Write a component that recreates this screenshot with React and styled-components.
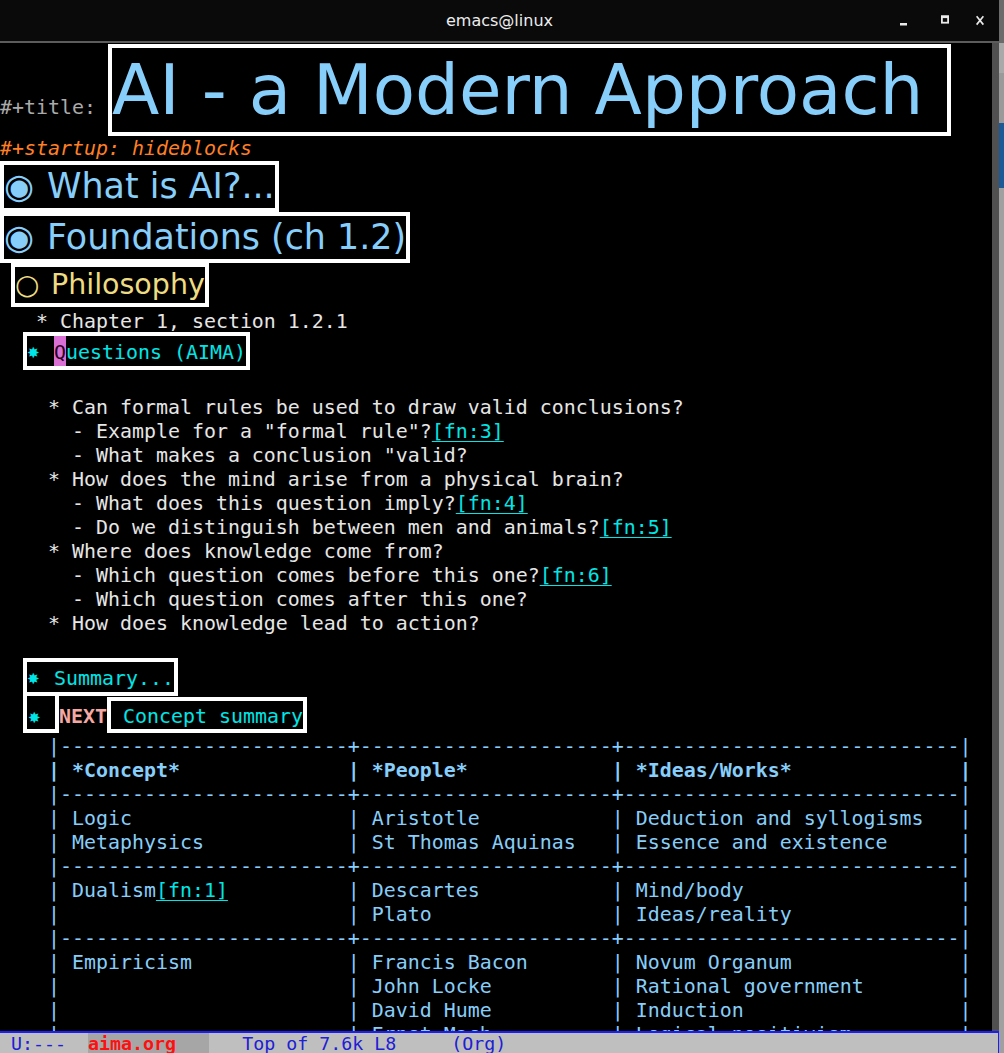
import React from 'react';
import styled, { createGlobalStyle } from 'styled-components';

const MONO = `"DejaVu Sans Mono", "Liberation Mono", monospace`;
const SANS = `"DejaVu Sans", "Liberation Sans", sans-serif`;
const MONO_SIZE = '19.93px';

const C = {
  sky: '#87cefa',
  gold: '#eedc82',
  cyan: '#00e5e5',
  text: '#e6e6e6',
  meta: '#aaaaaa',
  orange: '#ff7f24',
  salmon: '#f5a8a3',
};

const GlobalStyle = createGlobalStyle`
  html, body { margin: 0; padding: 0; background: #000; overflow: hidden; }
  #root { width: 1004px; height: 1053px; }
`;

const Screen = styled.div`
  display: flex;
  width: 1004px;
  height: 1053px;
  background: #000;
`;

const Window = styled.div`
  display: flex;
  flex-direction: column;
  width: 999px;
  height: 100%;
`;

const DesktopStrip = styled.div`
  width: 5px;
  height: 100%;
  background: linear-gradient(
    to bottom,
    #6b6b6b 0px, #6b6b6b 43px,
    #a9a9a9 43px, #a9a9a9 73px,
    #9a9a9a 73px, #9a9a9a 123px,
    #1b5a96 123px, #1b5a96 188px,
    #a0a0a0 188px
  );
`;

const TitleBar = styled.header`
  display: grid;
  grid-template-columns: 1fr auto 1fr;
  align-items: center;
  height: 41px;
  background: #0a0a0a;
  border-bottom: 2px solid #5c5c5c;
  color: #ededed;
  font-family: ${SANS};
  font-size: 16px;
`;

const WindowTitle = styled.div`
  grid-column: 2;
`;

const Controls = styled.div`
  grid-column: 3;
  display: flex;
  justify-content: flex-end;
  align-items: center;
  padding-right: 15px;
`;

const Control = styled.span`
  display: flex;
  margin-left: ${(p) => p.$gap || 0}px;
`;

const Body = styled.div`
  flex: 1;
  display: flex;
  min-height: 0;
`;

const Editor = styled.main`
  flex: 1;
  overflow: hidden;
  background: #000;
  color: ${C.text};
  font-family: ${MONO};
  font-size: ${MONO_SIZE};
  line-height: 24px;
`;

const Gutter = styled.div`
  width: 7px;
  background: #505050;
`;

const TitleRow = styled.div`
  display: flex;
  align-items: baseline;
  padding-top: 1px;
`;

const Keyword = styled.span`
  color: ${C.meta};
  white-space: pre;
`;

const TitleBox = styled.div`
  border: 4px solid #fff;
  height: 84px;
  line-height: 84px;
  padding-right: 2px;
  font-family: ${SANS};
  font-size: 69.2px;
  color: ${C.sky};
  white-space: pre;
`;

const MetaLine = styled.div`
  color: ${C.orange};
  font-style: italic;
  line-height: 25px;
  white-space: pre;
`;

const LEVELS = {
  1: { font: SANS, size: '34.9px', color: C.sky, inner: 43, lh: 43, bullet: 43, bulletSize: '34.5px' },
  2: { font: SANS, size: '28.5px', color: C.gold, inner: 36, lh: 36, bullet: 36, bulletSize: '28px' },
  3: { font: MONO, size: MONO_SIZE, color: C.cyan, inner: 30, lh: 34, bullet: 27, bulletSize: '15px' },
};

const Heading = styled.div`
  width: fit-content;
  margin-left: ${(p) => p.$indent || 0}px;
  height: ${(p) => LEVELS[p.$level].inner}px;
  line-height: ${(p) => LEVELS[p.$level].lh}px;
  border: 4px solid #fff;
  font-family: ${(p) => LEVELS[p.$level].font};
  font-size: ${(p) => LEVELS[p.$level].size};
  color: ${(p) => LEVELS[p.$level].color};
  white-space: pre;
`;

const Bullet = styled.span`
  display: inline-block;
  width: ${(p) => LEVELS[p.$level].bullet}px;
  font-family: ${SANS};
  font-size: ${(p) => LEVELS[p.$level].bulletSize};
  vertical-align: top;
`;

const Cursor = styled.span`
  display: inline-block;
  height: 30px;
  background: #da70d6;
  color: #2a0020;
  vertical-align: top;
  line-height: 34px;
`;

const TextLine = styled.div`
  white-space: pre;
  height: 24px;
  margin-top: ${(p) => p.$top || 0}px;
  line-height: ${(p) => p.$lh || 24}px;
`;

const Blank = styled.div`
  height: ${(p) => p.$h}px;
`;

const Footnote = styled.span`
  color: ${C.cyan};
  text-decoration: underline;
  text-underline-offset: 3px;
`;

const TodoRow = styled.div`
  display: flex;
  align-items: flex-start;
  margin-left: 23px;
  white-space: pre;
  color: ${C.cyan};
`;

const StarBox = styled.div`
  width: 28px;
  height: 28px;
  padding-top: 5px;
  line-height: 32px;
  border: 4px solid #fff;
  border-top: none;
`;

const StarGlyph = styled.span`
  font-family: ${SANS};
  font-size: 15px;
  padding-left: 1px;
`;

const Todo = styled.span`
  padding-top: 5px;
  height: 28px;
  line-height: 32px;
  font-weight: bold;
  color: ${C.salmon};
`;

const ConceptBox = styled.div`
  margin-top: 1px;
  height: 28px;
  line-height: 32px;
  border: 4px solid #fff;
`;

const Table = styled.div`
  margin-top: 2px;
  color: ${C.sky};
  white-space: pre;
`;

const TableLine = styled.div`
  font-weight: ${(p) => (p.$head ? 'bold' : 'normal')};
`;

const ModeLine = styled.footer`
  display: flex;
  height: 19px;
  padding-top: 1px;
  line-height: 20px;
  background: #bfbfbf;
  border-top: 2px solid #1c1cff;
  border-right: 1px solid #1c1cff;
  font-family: ${MONO};
  font-size: 18.3px;
  color: #2020d4;
  white-space: pre;
  overflow: hidden;
`;

const BufferName = styled.span`
  margin-top: -3px;
  padding-top: 1px;
  height: 21px;
  background: #a6a6a6;
  border-top: 2px solid #ff1a1a;
  color: #ff1010;
  font-weight: bold;
`;

const MinimizeIcon = () => (
  <svg width="8" height="12" viewBox="0 0 8 12">
    <rect x="0" y="8" width="7" height="2.5" fill="#eaeaea" />
  </svg>
);

const MaximizeIcon = () => (
  <svg width="8" height="12" viewBox="0 0 8 12">
    <rect x="0.9" y="1.4" width="6.2" height="6.3" fill="none" stroke="#eaeaea" strokeWidth="1.8" />
    <rect x="0" y="0.5" width="8" height="2.6" fill="#eaeaea" />
  </svg>
);

const CloseIcon = () => (
  <svg width="8" height="12" viewBox="0 0 8 12">
    <path d="M0.6 1.2 L7.4 9.6 M7.4 1.2 L0.6 9.6" stroke="#eaeaea" strokeWidth="1.7" fill="none" />
  </svg>
);

const bullets = [
  ['    * Can formal rules be used to draw valid conclusions?'],
  ['      - Example for a "formal rule"?', '[fn:3]'],
  ['      - What makes a conclusion "valid?'],
  ['    * How does the mind arise from a physical brain?'],
  ['      - What does this question imply?', '[fn:4]'],
  ['      - Do we distinguish between men and animals?', '[fn:5]'],
  ['    * Where does knowledge come from?'],
  ['      - Which question comes before this one?', '[fn:6]'],
  ['      - Which question comes after this one?'],
  ['    * How does knowledge lead to action?'],
];

const SEP = '|' + '-'.repeat(24) + '+' + '-'.repeat(21) + '+' + '-'.repeat(28) + '|';
const WIDTHS = [23, 20, 27];

const tableRows = [
  { sep: true },
  { head: true, cells: [['*Concept*'], ['*People*'], ['*Ideas/Works*']] },
  { sep: true },
  { cells: [['Logic'], ['Aristotle'], ['Deduction and syllogisms']] },
  { cells: [['Metaphysics'], ['St Thomas Aquinas'], ['Essence and existence']] },
  { sep: true },
  { cells: [['Dualism', '[fn:1]'], ['Descartes'], ['Mind/body']] },
  { cells: [[''], ['Plato'], ['Ideas/reality']] },
  { sep: true },
  { cells: [['Empiricism'], ['Francis Bacon'], ['Novum Organum']] },
  { cells: [[''], ['John Locke'], ['Rational government']] },
  { cells: [[''], ['David Hume'], ['Induction']] },
  { cells: [[''], ['Ernst Mach'], ['Logical positivism']] },
];

const TableRow = ({ row }) => {
  if (row.sep) return <TableLine>{'    ' + SEP}</TableLine>;
  return (
    <TableLine $head={row.head}>
      {'    '}
      {row.cells.map(([text, fn], i) => {
        const used = text.length + (fn ? fn.length : 0);
        return (
          <React.Fragment key={i}>
            {'| ' + text}
            {fn && <Footnote>{fn}</Footnote>}
            {' '.repeat(Math.max(0, WIDTHS[i] - used))}
          </React.Fragment>
        );
      })}
      {'|'}
    </TableLine>
  );
};

export default function App() {
  return (
    <>
      <GlobalStyle />
      <Screen>
        <Window>
          <TitleBar>
            <WindowTitle>emacs@linux</WindowTitle>
            <Controls>
              <Control><MinimizeIcon /></Control>
              <Control $gap={33}><MaximizeIcon /></Control>
              <Control $gap={27}><CloseIcon /></Control>
            </Controls>
          </TitleBar>
          <Body>
            <Editor>
              <TitleRow>
                <Keyword>{'#+title: '}</Keyword>
                <TitleBox>{'AI - a Modern Approach '}</TitleBox>
              </TitleRow>
              <MetaLine>#+startup: hideblocks</MetaLine>
              <Heading $level={1}>
                <Bullet $level={1}>◉</Bullet>What is AI?...
              </Heading>
              <Heading $level={1}>
                <Bullet $level={1}>◉</Bullet>Foundations (ch 1.2)
              </Heading>
              <Heading $level={2} $indent={11}>
                <Bullet $level={2}>○</Bullet>Philosophy
              </Heading>
              <TextLine $top={1} $lh={28}>{'   * Chapter 1, section 1.2.1'}</TextLine>
              <Heading $level={3} $indent={23}>
                <Bullet $level={3}>✸</Bullet>
                <Cursor>Q</Cursor>uestions (AIMA)
              </Heading>
              <Blank $h={25} />
              {bullets.map(([text, fn], i) => (
                <TextLine key={i} $lh={25}>
                  {text}
                  {fn && <Footnote>{fn}</Footnote>}
                </TextLine>
              ))}
              <Blank $h={23} />
              <Heading $level={3} $indent={23}>
                <Bullet $level={3}>✸</Bullet>Summary...
              </Heading>
              <TodoRow>
                <StarBox><StarGlyph>✸</StarGlyph></StarBox>
                <Todo>NEXT</Todo>
                <ConceptBox>{' Concept summary'}</ConceptBox>
              </TodoRow>
              <Table>
                {tableRows.map((row, i) => (
                  <TableRow key={i} row={row} />
                ))}
              </Table>
            </Editor>
            <Gutter />
          </Body>
          <ModeLine>
            {' U:---  '}
            <BufferName>{'aima.org   '}</BufferName>
            {'   Top of 7.6k L8     (Org)'}
          </ModeLine>
        </Window>
        <DesktopStrip />
      </Screen>
    </>
  );
}
